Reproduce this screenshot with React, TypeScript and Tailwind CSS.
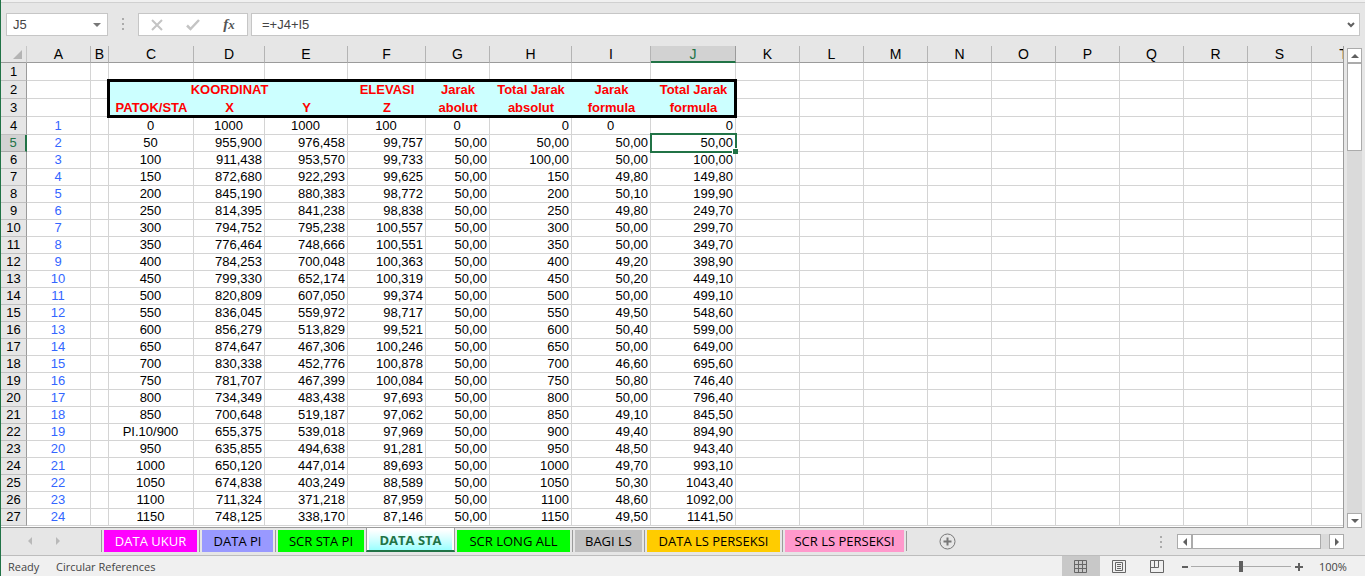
import React from 'react';

type Column = { name: string; width: string; align?: string };

const columns: Column[] = [
  { name: 'A', width: 'w-[64px]', align: 'text-center text-[#3366ff]' },
  { name: 'B', width: 'w-[18px]' },
  { name: 'C', width: 'w-[85px]', align: 'text-center' },
  { name: 'D', width: 'w-[71px]', align: 'text-right' },
  { name: 'E', width: 'w-[83px]', align: 'text-right' },
  { name: 'F', width: 'w-[78px]', align: 'text-right' },
  { name: 'G', width: 'w-[64px]', align: 'text-right' },
  { name: 'H', width: 'w-[82px]', align: 'text-right' },
  { name: 'I', width: 'w-[79px]', align: 'text-right' },
  { name: 'J', width: 'w-[85px]', align: 'text-right' },
  ...['K', 'L', 'M', 'N', 'O', 'P', 'Q', 'R', 'S', 'T'].map((name) => ({ name, width: 'w-[64px]' })),
];

// C2:J3, the framed title block
const titles: Record<number, string[]> = {
  2: ['', 'KOORDINAT', '', 'ELEVASI', 'Jarak', 'Total Jarak', 'Jarak', 'Total Jarak'],
  3: ['PATOK/STA', 'X', 'Y', 'Z', 'abolut', 'absolut', 'formula', 'formula'],
};

// columns C to J, from row 4 down
const records = [
  ['0', '1000', '1000', '100', '0', '0', '0', '0'],
  ['50', '955,900', '976,458', '99,757', '50,00', '50,00', '50,00', '50,00'],
  ['100', '911,438', '953,570', '99,733', '50,00', '100,00', '50,00', '100,00'],
  ['150', '872,680', '922,293', '99,625', '50,00', '150', '49,80', '149,80'],
  ['200', '845,190', '880,383', '98,772', '50,00', '200', '50,10', '199,90'],
  ['250', '814,395', '841,238', '98,838', '50,00', '250', '49,80', '249,70'],
  ['300', '794,752', '795,238', '100,557', '50,00', '300', '50,00', '299,70'],
  ['350', '776,464', '748,666', '100,551', '50,00', '350', '50,00', '349,70'],
  ['400', '784,253', '700,048', '100,363', '50,00', '400', '49,20', '398,90'],
  ['450', '799,330', '652,174', '100,319', '50,00', '450', '50,20', '449,10'],
  ['500', '820,809', '607,050', '99,374', '50,00', '500', '50,00', '499,10'],
  ['550', '836,045', '559,972', '98,717', '50,00', '550', '49,50', '548,60'],
  ['600', '856,279', '513,829', '99,521', '50,00', '600', '50,40', '599,00'],
  ['650', '874,647', '467,306', '100,246', '50,00', '650', '50,00', '649,00'],
  ['700', '830,338', '452,776', '100,878', '50,00', '700', '46,60', '695,60'],
  ['750', '781,707', '467,399', '100,084', '50,00', '750', '50,80', '746,40'],
  ['800', '734,349', '483,438', '97,693', '50,00', '800', '50,00', '796,40'],
  ['850', '700,648', '519,187', '97,062', '50,00', '850', '49,10', '845,50'],
  ['PI.10/900', '655,375', '539,018', '97,969', '50,00', '900', '49,40', '894,90'],
  ['950', '635,855', '494,638', '91,281', '50,00', '950', '48,50', '943,40'],
  ['1000', '650,120', '447,014', '89,693', '50,00', '1000', '49,70', '993,10'],
  ['1050', '674,838', '403,249', '88,589', '50,00', '1050', '50,30', '1043,40'],
  ['1100', '711,324', '371,218', '87,959', '50,00', '1100', '48,60', '1092,00'],
  ['1150', '748,125', '338,170', '87,146', '50,00', '1150', '49,50', '1141,50'],
];

const sheets = [
  { name: 'DATA UKUR', style: 'w-[93px] bg-[#ff00ff] text-white' },
  { name: 'DATA PI', style: 'w-[71px] bg-[#9999ff] text-black' },
  { name: 'SCR STA PI', style: 'w-[86px] bg-[#00ff00] text-black' },
  { name: 'DATA STA', style: '', active: true },
  { name: 'SCR LONG ALL', style: 'w-[113px] bg-[#00ff00] text-black' },
  { name: 'BAGI LS', style: 'w-[67px] bg-[#c0c0c0] text-black' },
  { name: 'DATA LS PERSEKSI', style: 'w-[133px] bg-[#ffcc00] text-black' },
  { name: 'SCR LS PERSEKSI', style: 'w-[119px] bg-[#ff99cc] text-black' },
];

const Dots: React.FC = () => (
  <svg width="3" height="13" viewBox="0 0 3 13" fill="#ababab" aria-hidden="true">
    <path d="M0 0h2v2H0zM0 5h2v2H0zM0 10h2v2H0z" />
  </svg>
);

const arrows = {
  up: 'M0 6 4 2l4 4z',
  down: 'M0 2h8L4 6z',
  left: 'M6 0v8L2 4z',
  right: 'M2 0l4 4-4 4z',
};

const Arrow: React.FC<{ dir: keyof typeof arrows; color?: string }> = ({ dir, color = '#606060' }) => (
  <svg width="8" height="8" viewBox="0 0 8 8" fill={color} aria-hidden="true">
    <path d={arrows[dir]} />
  </svg>
);

const ScrollButton: React.FC<{ dir: keyof typeof arrows }> = ({ dir }) => (
  <button
    aria-label={`Scroll ${dir}`}
    className="flex size-[15px] shrink-0 items-center justify-center border border-[#ababab] bg-white"
  >
    <Arrow dir={dir} />
  </button>
);

const FormulaBar: React.FC = () => (
  <div className="flex h-[23px] items-stretch px-[5px]">
    <div className="flex w-[102px] items-center border border-[#c6c6c6] bg-white pr-1.5">
      <input
        aria-label="Name Box"
        defaultValue="J5"
        className="w-full min-w-0 flex-1 pl-1.5 text-[13px] text-[#444] outline-none"
      />
      <button aria-label="Show names">
        <Arrow dir="down" color="#777" />
      </button>
    </div>
    <div className="flex w-[30px] items-center justify-center">
      <Dots />
    </div>
    <div className="mr-[3px] flex w-[110px] items-center border border-[#c6c6c6] bg-white">
      <button aria-label="Cancel" className="flex flex-1 justify-center">
        <svg width="12" height="12" viewBox="0 0 12 12" stroke="#c4c4c4" strokeWidth="2" fill="none">
          <path d="M1 1l10 10M11 1 1 11" />
        </svg>
      </button>
      <button aria-label="Enter" className="flex flex-1 justify-center">
        <svg width="14" height="12" viewBox="0 0 14 12" stroke="#c4c4c4" strokeWidth="2.5" fill="none">
          <path d="M1 6.5 4.5 10 13 1" />
        </svg>
      </button>
      <button
        aria-label="Insert Function"
        className="flex-1 font-['Liberation_Serif',serif] text-[15px] leading-4 font-bold text-[#555] italic"
      >
        f<span className="text-[13px]">x</span>
      </button>
    </div>
    <div className="flex min-w-0 flex-1 items-center border border-[#c6c6c6] bg-white pr-1">
      <input
        aria-label="Formula Bar"
        defaultValue="=+J4+I5"
        className="w-full min-w-0 flex-1 pl-2.5 text-[13px] text-[#444] outline-none"
      />
      <button aria-label="Expand Formula Bar">
        <svg width="8" height="6" viewBox="0 0 8 6" stroke="#606060" strokeWidth="2" fill="none">
          <path d="M1 1l3 3 3-3" />
        </svg>
      </button>
    </div>
  </div>
);

const RowNumber: React.FC<{ row: number }> = ({ row }) => (
  <th
    scope="row"
    className={
      row === 5
        ? 'border-r-2 border-b border-r-[#217346] border-b-[#ababab] bg-[#d2d2d2] text-center font-normal text-[#217346]'
        : 'border-r border-b border-r-[#9b9b9b] border-b-[#c0c0c0] bg-[#e6e6e6] text-center font-normal'
    }
  >
    {row}
  </th>
);

const TitleRow: React.FC<{ row: number }> = ({ row }) => (
  <tr className="h-[18px]">
    <RowNumber row={row} />
    {columns.map((col, i) => {
      if (i < 2 || i > 9) return <td key={col.name} className="border-r border-b border-[#d4d4d4]" />;
      const framed = row === 3 && i === 2;
      return (
        <td key={col.name} className={`bg-[#ccffff] font-bold text-[#ff0000] ${framed ? 'relative' : ''}`}>
          <div className="flex justify-center whitespace-nowrap">{titles[row][i - 2]}</div>
          {framed && (
            <span className="absolute -top-[20px] -left-[2px] z-10 h-[39px] w-[630px] border-[3px] border-black" />
          )}
        </td>
      );
    })}
  </tr>
);

const DataRow: React.FC<{ row: number }> = ({ row }) => {
  const record = records[row - 4];
  return (
    <tr className={row === 4 ? 'h-[18px]' : 'h-[17px]'}>
      <RowNumber row={row} />
      {columns.map((col, i) => {
        let text = '';
        if (i === 0) text = String(row - 3);
        else if (i > 1 && i < 10) text = record[i - 2];
        // the first record is centred in most of its columns
        const centred = row === 4 && [3, 4, 5, 6, 8].includes(i);
        const selected = row === 5 && i === 9;
        return (
          <td
            key={col.name}
            className={`border-r border-b border-[#d4d4d4] pr-0.5 pl-px whitespace-nowrap ${selected ? 'relative' : ''} ${centred ? 'text-center' : col.align ?? ''}`}
          >
            {text}
            {selected && (
              <span className="absolute -top-[2px] -left-px z-10 h-[20px] w-[87px] border-2 border-[#217346]">
                <span className="absolute -right-[3px] -bottom-[3px] size-[6px] border-t border-l border-white bg-[#217346]" />
              </span>
            )}
          </td>
        );
      })}
    </tr>
  );
};

const Sheet: React.FC = () => (
  <div className="min-w-0 flex-1 overflow-hidden border-r border-b border-[#9b9b9b]">
    <table className="w-px table-fixed border-separate border-spacing-0 bg-white pb-px text-[13px] leading-4 text-black">
      <colgroup>
        <col className="w-[26px]" />
        {columns.map((col) => (
          <col key={col.name} className={col.width} />
        ))}
      </colgroup>
      <thead>
        <tr className="h-[17px] bg-[#e6e6e6] text-[14px]">
          <td className="border-r border-b border-r-[#c6c6c6] border-b-[#9b9b9b]">
            <svg className="mr-1 ml-auto" width="9" height="9" viewBox="0 0 9 9" fill="#b4b4b4" aria-hidden="true">
              <path d="M9 0v9H0z" />
            </svg>
          </td>
          {columns.map((col) => (
            <th
              key={col.name}
              scope="col"
              className={
                col.name === 'J'
                  ? 'border-r border-b-2 border-r-[#9b9b9b] border-b-[#217346] bg-[#d2d2d2] font-normal text-[#217346]'
                  : 'border-r border-b border-r-[#b4b4b4] border-b-[#9b9b9b] font-normal'
              }
            >
              <div className="flex h-[15px] items-center justify-center">{col.name}</div>
            </th>
          ))}
        </tr>
      </thead>
      <tbody>
        <tr className="h-[18px]">
          <RowNumber row={1} />
          {columns.map((col) => (
            <td key={col.name} className="border-r border-b border-[#d4d4d4]" />
          ))}
        </tr>
        <TitleRow row={2} />
        <TitleRow row={3} />
        {records.map((record, i) => (
          <DataRow key={record[0]} row={i + 4} />
        ))}
      </tbody>
    </table>
  </div>
);

const SheetTabs: React.FC = () => (
  <div className="flex h-[28px] items-start border-b border-[#bdbdbd] font-['Open_Sans',sans-serif] text-[13px] leading-5">
    <div className="flex h-[25px] w-[100px] items-center gap-5 pl-[25px]">
      <button aria-label="Previous sheet">
        <Arrow dir="left" color="#b9b9b9" />
      </button>
      <button aria-label="Next sheet">
        <Arrow dir="right" color="#b9b9b9" />
      </button>
    </div>
    <div role="tablist" className="flex items-start">
      {sheets.map((sheet, i) =>
        sheet.active ? (
          <button
            key={sheet.name}
            role="tab"
            aria-selected="true"
            className="h-[24px] w-[89px] border-x border-b-2 border-x-[#9b9b9b] border-b-[#217346] bg-white px-0.5 pt-0.5 font-bold text-[#217346]"
          >
            <span className="flex h-full items-center justify-center bg-linear-to-b from-white to-[#99ffff]">
              {sheet.name}
            </span>
          </button>
        ) : (
          <div
            key={sheet.name}
            className={`mt-0.5 flex h-[22px] px-0.5 ${i === 4 ? '' : 'border-l border-[#9b9b9b]'}`}
          >
            <button role="tab" aria-selected="false" className={`whitespace-nowrap ${sheet.style}`}>
              {sheet.name}
            </button>
          </div>
        ),
      )}
    </div>
    <div className="mt-[3px] h-5 border-l border-[#9b9b9b]" />
    <button aria-label="New sheet" className="mt-[5px] ml-8">
      <svg width="17" height="17" viewBox="0 0 17 17" fill="none" stroke="#777">
        <circle cx="8.5" cy="8.5" r="7.5" />
        <path strokeWidth="2" d="M8.5 4.5v8M4.5 8.5h8" />
      </svg>
    </button>
    <div className="mt-2 mr-[14px] ml-auto">
      <Dots />
    </div>
    <div className="mt-[6px] mr-[21px] flex w-[167px] bg-[#dadada]">
      <ScrollButton dir="left" />
      <div className="mr-2 flex-1 border border-[#ababab] bg-white" />
      <ScrollButton dir="right" />
    </div>
  </div>
);

const StatusBar: React.FC = () => (
  <div className="flex h-[21px] items-center bg-[#f0f0f0] pl-[7px] font-['Open_Sans',sans-serif] text-[11px] leading-4 text-[#444]">
    <span className="w-12">Ready</span>
    <span>Circular References</span>
    <div className="ml-auto flex h-full">
      <button aria-label="Normal" className="flex w-[38px] items-center justify-center bg-[#c8c8c8]">
        <svg width="14" height="14" viewBox="0 0 14 14" fill="none" stroke="#666">
          <path d="M.5.5h12v12H.5zM.5 4.5h12M.5 8.5h12M4.5.5v12M8.5.5v12" />
        </svg>
      </button>
      <button aria-label="Page Layout" className="flex w-[38px] items-center justify-center">
        <svg width="14" height="14" viewBox="0 0 14 14" fill="none" stroke="#666">
          <path d="M.5.5h13v12H.5zM3.5 2.5h7v8h-7zM5 4.5h4M5 6.5h4M5 8.5h4" />
        </svg>
      </button>
      <button aria-label="Page Break Preview" className="flex w-[38px] items-center justify-center">
        <svg width="14" height="14" viewBox="0 0 14 14" fill="none" stroke="#666">
          <path d="M.5.5h13v12H.5zM4.5.5v7M8.5.5v7M.5 7.5h8" />
        </svg>
      </button>
    </div>
    <button aria-label="Zoom out" className="ml-[3px] flex h-full w-3 items-center justify-center">
      <span className="h-0.5 w-1.5 bg-[#606060]" />
    </button>
    <input
      type="range"
      aria-label="Zoom"
      defaultValue="50"
      className="h-3 w-[100px] appearance-none bg-[linear-gradient(#ababab,#ababab)] bg-size-[100%_1px] bg-center bg-no-repeat [&::-webkit-slider-thumb]:h-[11px] [&::-webkit-slider-thumb]:w-1 [&::-webkit-slider-thumb]:appearance-none [&::-webkit-slider-thumb]:bg-[#606060]"
    />
    <button aria-label="Zoom in" className="mr-4 ml-1 flex h-full items-center">
      <svg width="8" height="8" viewBox="0 0 8 8" stroke="#606060" strokeWidth="2">
        <path d="M4 0v8M0 4h8" />
      </svg>
    </button>
    <span className="w-[46px]">100%</span>
  </div>
);

const App: React.FC = () => {
  return (
    <div className="min-h-screen border-l border-[#217346] bg-[#e6e6e6] font-['Liberation_Sans',sans-serif]">
      <div className="mb-[10px] h-[3px] border-b border-[#d0d0d0] bg-[#f0f0f0]" />
      <FormulaBar />
      <div className="mt-[10px] flex">
        <Sheet />
        <div className="mx-[3px] mt-0.5 flex w-[15px] flex-col bg-[#dadada]">
          <ScrollButton dir="up" />
          <div className="h-[88px] border border-[#ababab] bg-white" />
          <div className="flex-1" />
          <ScrollButton dir="down" />
        </div>
      </div>
      <SheetTabs />
      <StatusBar />
    </div>
  );
};

export default App;
